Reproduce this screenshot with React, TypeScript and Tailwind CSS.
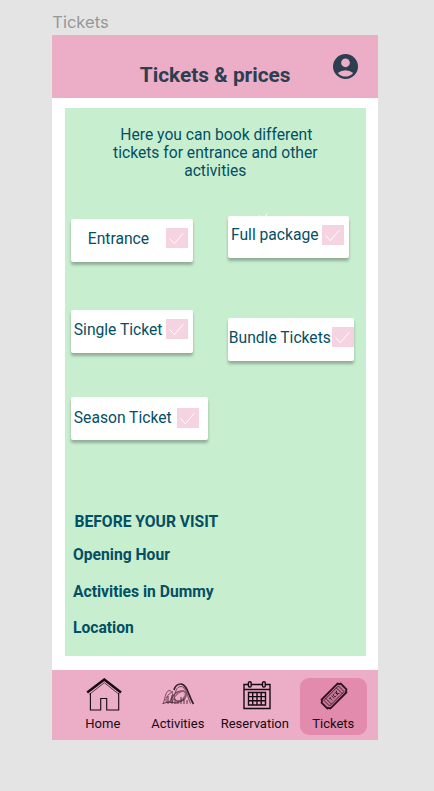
import React from "react";

function Check({ className = "" }: { className?: string }) {
  return (
    <span className={`block h-5 w-[22px] shrink-0 bg-[#f5d3e1] ${className}`}>
      <svg viewBox="0 0 22 20" className="h-5 w-[22px]" fill="none" stroke="#fff" strokeWidth="1">
        <path d="M3.500 10.400 8.300 15.800 17.300 5.200" />
      </svg>
    </span>
  );
}

function Ticket({ label, box, text, check }: { label: string; box: string; text: string; check: string }) {
  return (
    <button
      className={`flex h-[42.5px] items-start rounded-[2px] bg-white shadow-[0_3px_3px_rgba(0,0,0,0.27)] ${box}`}
    >
      <span className={`shrink-0 whitespace-nowrap text-left text-[15.65px] leading-[18px] ${text}`}>{label}</span>
      <Check className={check} />
    </button>
  );
}

function HomeIcon() {
  return (
    <svg viewBox="0 0 36 34" className="h-[34px] w-9" fill="none" stroke="#160b12">
      <path d="M1.200 14.500 18.300 1.500 35 14.500" strokeWidth="2.500" />
      <path d="M3.500 16.300 18.300 4.700 33 16.300" stroke="#5d3448" strokeWidth="1" />
      <path d="M4.400 15v17h10.300V20.500h6V32h12V15" strokeWidth="1.100" />
    </svg>
  );
}

function CoasterIcon() {
  return (
    <svg viewBox="0 0 34 26" className="h-[26px] w-[34px]" fill="none" stroke="#4d2d3b" strokeWidth="1">
      <path d="M1.500 22C4 20 4 9 8 8.500c5 0 5 10-1 12-4 0-2-8 5-11" stroke="#7d4c61" />
      <path d="M13 8C14 4 16 2 20 2c6 0 8 13 12.500 20" strokeWidth="1.700" stroke="#38202b" />
      <path d="M14 12C15 7 17 4.500 20 4.500c5 0 7 11.500 9.500 17" strokeWidth=".8" />
      <path d="M9 21c1-7 7-13 13-12 6 1 3 10-4 10-6 0-6-7-2-9" stroke="#7b4a5e" strokeWidth="1.300" />
      <path d="M11 20c2-6 9-13 13-10 2 3-3 10-9 10" stroke="#935d74" strokeWidth="1.300" />
      <path d="M2 21.500 7 20l9 1 7-3M7 14v8M11 13v9M14 17v5M17 19v3M20 15v7M23 16v6M26 18v4" strokeWidth=".9" />
    </svg>
  );
}

function CalendarIcon() {
  return (
    <svg viewBox="0 0 28 30" className="h-[30px] w-7" fill="none" stroke="#160b12" strokeWidth="1.400">
      <path d="M5 3.500H1V27.500h26V3.500h-4M8.500 3.500h11M1 8.500h26" />
      <rect x="5.400" y=".8" width="2.800" height="5.200" rx="1.200" />
      <rect x="19.500" y=".8" width="2.800" height="5.200" rx="1.200" />
      <path d="M5.500 11.500h17v12.500h-17zM9.700 11.500V24M14 11.500V24M18.200 11.500V24M5.500 15.600h17M5.500 19.800h17" />
    </svg>
  );
}

function TicketIcon() {
  return (
    <svg viewBox="0 0 30 30" className="h-[30px] w-[30px]" fill="none" stroke="#2c131e">
      <g transform="rotate(-45 15 15)">
        <path d="M3.500 8.800h23q.2 1.800 2 2v8.400q-1.800.2-2 2h-23q-.2-1.800-2-2v-8.400q1.800-.2 2-2z" fill="#c97797" strokeWidth="1.800" strokeLinejoin="round" />
        <rect x="4.800" y="11" width="20.400" height="8" strokeWidth=".8" />
        <path d="M7.500 11v8M22.500 11v8" strokeWidth=".8" />
        <path d="M9.500 13.500h2.500M10.700 13.500v3.500M13.500 13v4M17 13.500h-2v3h2M18.500 13v4M20.500 13l-2 2 2 2" strokeWidth=".8" />
      </g>
    </svg>
  );
}

function NavItem({ label, className, iconBox, children }: { label: string; className: string; iconBox: string; children: React.ReactNode }) {
  return (
    <a className={`flex h-[57px] shrink-0 flex-col items-center ${className}`}>
      <span className={`flex h-[37px] items-start ${iconBox}`}>{children}</span>
      <span className="whitespace-nowrap text-[13px] leading-[17px]">{label}</span>
    </a>
  );
}

export default function App() {
  return (
    <div className="h-[791px] w-[434px] overflow-hidden bg-[#e4e4e4] pl-[52.3px] pt-3 font-['Roboto',sans-serif] text-[#034f63]">
      <div className="h-[23px] font-['Inter',sans-serif] text-[16.5px] leading-5 text-[#979797]">Tickets</div>
      <main className="flex h-[705px] w-[325.5px] flex-col bg-white">
        <header className="flex h-[63px] shrink-0 bg-[#ecadc7] text-[#2c3e50]">
          <h1 className="ml-[87.500px] mt-7 w-[190px] whitespace-nowrap text-[20.8px] font-bold leading-6">Tickets &amp; prices</h1>
          <svg viewBox="2 2 20 20" className="ml-[3px] mt-[18.500px] h-[25px] w-[25px]" fill="currentColor">
            <path d="M12 2a10 10 0 1 0 0 20 10 10 0 0 0 0-20Zm0 3.500a3.500 3.500 0 1 1 0 7 3.500 3.500 0 0 1 0-7Zm0 14.500c-2.030 0-4.430-.82-6.140-2.880a9.950 9.950 0 0 1 12.280 0C16.430 19.180 14.030 20 12 20Z" />
          </svg>
        </header>
        <section className="ml-[12.5px] mt-[10px] h-[547.5px] w-[301px] bg-[#c7eecf]">
          <p className="h-[107.500px] pt-[18px] text-center text-[15.65px] leading-[18px]">
            <span className="ml-[2px]">Here you can book different</span>
            <br />
            tickets for entrance and other
            <br />
            activities
          </p>
          <div className="flex h-[297.500px] pl-[6.5px]">
            <div className="w-[156.4px] pt-[3.5px]">
              <Ticket label="Entrance" box="w-[121.5px]" text="w-[94.500px] pl-[16.500px] pt-[10.500px]" check="mt-[9px]" />
              <div className="h-[48.5px]" />
              <Ticket label="Single Ticket" box="w-[121.5px]" text="w-[94.500px] pl-[2.500px] pt-[10.500px]" check="mt-[9px]" />
              <div className="h-[44.5px]" />
              <Ticket label="Season Ticket" box="w-[137px]" text="w-[105.700px] pl-[2.500px] pt-3" check="mt-[11px]" />
            </div>
            <div className="relative">
              <svg viewBox="0 0 12 6" className="absolute left-[30px] top-[-3px] h-[6px] w-3" fill="none" stroke="#fff" strokeWidth="1">
                <path d="M1 2 4.500 6M9.500 .5 6 4.500" />
              </svg>
              <Ticket label="Full package" box="w-[121.5px]" text="w-[94.500px] pl-[3.300px] pt-[10px]" check="mt-[9.500px]" />
              <div className="h-[60px]" />
              <Ticket label="Bundle Tickets" box="w-[126.5px]" text="w-[104.300px] pl-[1.100px] pt-[10.500px]" check="mt-[9px]" />
            </div>
          </div>
          <div className="pl-[8.200px] text-[15.65px] font-bold leading-[18px]">
            <h2 className="h-[33px] pl-[1.500px]">BEFORE YOUR VISIT</h2>
            <p className="h-[36.5px]">Opening Hour</p>
            <p className="h-[36.5px]">Activities in Dummy</p>
            <p>Location</p>
          </div>
        </section>
        <nav className="mt-auto flex h-[70px] shrink-0 bg-[#ecadc7] pt-2 text-[#160b12]">
          <NavItem label="Home" className="ml-[25.500px] w-[50px]" iconBox="pl-[2px]"><HomeIcon /></NavItem>
          <NavItem label="Activities" className="ml-[20px] w-[60px]" iconBox="pt-1"><CoasterIcon /></NavItem>
          <NavItem label="Reservation" className="ml-[10px] w-[74px]" iconBox="pt-[3px] pl-[4px]"><CalendarIcon /></NavItem>
          <NavItem label="Tickets" className="ml-2 w-[67px] rounded-[9px] bg-[#e28bad]" iconBox="pt-[3px] pl-px"><TicketIcon /></NavItem>
        </nav>
      </main>
    </div>
  );
}
